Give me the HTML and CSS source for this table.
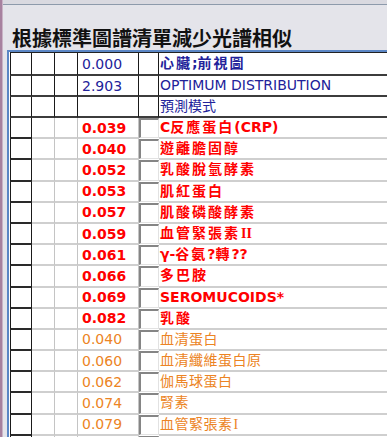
FILE: index.html
```html
<!DOCTYPE html>
<html>
<head>
<meta charset="utf-8">
<link rel="stylesheet" href="styles.css">
</head>
<body>
<div class="wrap">
  <div class="side"></div>
  <div class="main">
    <div class="topbar"></div>
    <h1 class="title">根據標準圖譜清單減少光譜相似</h1>
    <div class="frame">
      <div class="grid">
        <div class="row head first">
          <div class="c c1"></div><div class="c"></div><div class="c"></div>
          <div class="c num navy">0.000</div><div class="c"></div>
          <div class="c txt navy bold"><span class="cj">心臟</span>;<span class="cj">前視圖</span></div>
        </div>
        <div class="row head">
          <div class="c c1"></div><div class="c"></div><div class="c"></div>
          <div class="c num navy">2.903</div><div class="c"></div>
          <div class="c txt navy">OPTIMUM DISTRIBUTION</div>
        </div>
        <div class="row head">
          <div class="c c1"></div><div class="c"></div><div class="c"></div>
          <div class="c num navy"></div><div class="c"></div>
          <div class="c txt navy">預測模式</div>
        </div>

        <div class="row body red">
          <div class="c c1"></div><div class="c"></div><div class="c"></div>
          <div class="c num">0.039</div><div class="c chk"><span class="box"></span></div>
          <div class="c txt">C<span class="cj">反應蛋白</span>(CRP)</div>
        </div>
        <div class="row body red">
          <div class="c c1"></div><div class="c"></div><div class="c"></div>
          <div class="c num">0.040</div><div class="c chk"><span class="box"></span></div>
          <div class="c txt"><span class="cj">遊離膽固醇</span></div>
        </div>
        <div class="row body red">
          <div class="c c1"></div><div class="c"></div><div class="c"></div>
          <div class="c num">0.052</div><div class="c chk"><span class="box"></span></div>
          <div class="c txt"><span class="cj">乳酸脫氫酵素</span></div>
        </div>
        <div class="row body red">
          <div class="c c1"></div><div class="c"></div><div class="c"></div>
          <div class="c num">0.053</div><div class="c chk"><span class="box"></span></div>
          <div class="c txt"><span class="cj">肌紅蛋白</span></div>
        </div>
        <div class="row body red">
          <div class="c c1"></div><div class="c"></div><div class="c"></div>
          <div class="c num">0.057</div><div class="c chk"><span class="box"></span></div>
          <div class="c txt"><span class="cj">肌酸磷酸酵素</span></div>
        </div>
        <div class="row body red">
          <div class="c c1"></div><div class="c"></div><div class="c"></div>
          <div class="c num">0.059</div><div class="c chk"><span class="box"></span></div>
          <div class="c txt"><span class="cj">血管緊張素</span><span class="serif">II</span></div>
        </div>
        <div class="row body red">
          <div class="c c1"></div><div class="c"></div><div class="c"></div>
          <div class="c num">0.061</div><div class="c chk"><span class="box"></span></div>
          <div class="c txt">γ-<span class="cj">谷氨</span>?<span class="cj">轉</span>??</div>
        </div>
        <div class="row body red">
          <div class="c c1"></div><div class="c"></div><div class="c"></div>
          <div class="c num">0.066</div><div class="c chk"><span class="box"></span></div>
          <div class="c txt"><span class="cj">多巴胺</span></div>
        </div>
        <div class="row body red">
          <div class="c c1"></div><div class="c"></div><div class="c"></div>
          <div class="c num">0.069</div><div class="c chk"><span class="box"></span></div>
          <div class="c txt">SEROMUCOIDS*</div>
        </div>
        <div class="row body red">
          <div class="c c1"></div><div class="c"></div><div class="c"></div>
          <div class="c num">0.082</div><div class="c chk"><span class="box"></span></div>
          <div class="c txt"><span class="cj">乳酸</span></div>
        </div>

        <div class="row body orange">
          <div class="c c1"></div><div class="c"></div><div class="c"></div>
          <div class="c num">0.040</div><div class="c chk"><span class="box"></span></div>
          <div class="c txt">血清蛋白</div>
        </div>
        <div class="row body orange">
          <div class="c c1"></div><div class="c"></div><div class="c"></div>
          <div class="c num">0.060</div><div class="c chk"><span class="box"></span></div>
          <div class="c txt">血清纖維蛋白原</div>
        </div>
        <div class="row body orange">
          <div class="c c1"></div><div class="c"></div><div class="c"></div>
          <div class="c num">0.062</div><div class="c chk"><span class="box"></span></div>
          <div class="c txt">伽馬球蛋白</div>
        </div>
        <div class="row body orange">
          <div class="c c1"></div><div class="c"></div><div class="c"></div>
          <div class="c num">0.074</div><div class="c chk"><span class="box"></span></div>
          <div class="c txt">腎素</div>
        </div>
        <div class="row body orange">
          <div class="c c1"></div><div class="c"></div><div class="c"></div>
          <div class="c num">0.079</div><div class="c chk"><span class="box"></span></div>
          <div class="c txt">血管緊張素<span class="serif">I</span></div>
        </div>
        <div class="row body orange">
          <div class="c c1"></div><div class="c"></div><div class="c"></div>
          <div class="c num"></div><div class="c chk"><span class="box"></span></div>
          <div class="c txt"></div>
        </div>
      </div>
    </div>
  </div>
</div>
</body>
</html>
```

FILE: styles.css
```css
html, body {
  margin: 0;
  padding: 0;
  height: 100%;
  overflow: hidden;
}
body {
  background: #e4e4ea;
  font-family: "DejaVu Sans", "Noto Sans CJK TC", sans-serif;
  font-size: 14px;
}
.wrap {
  display: flex;
  height: 437px;
}
.side {
  width: 2px;
  flex: none;
  background: #a7819f;
  border-right: 1px solid #c9b3c6;
}
.main {
  flex: 1;
  min-width: 0;
  display: flex;
  flex-direction: column;
}
.topbar {
  height: 4px;
  background: #d9d9e0;
  border-bottom: 1px solid #8d9aab;
  flex: none;
}
.title {
  margin: 21px 0 0 0;
  padding-left: 9px;
  height: 24px;
  line-height: 24px;
  font-family: "Noto Sans CJK TC", sans-serif;
  font-size: 20px;
  font-weight: bold;
  color: #111;
  white-space: nowrap;
  flex: none;
}
.frame {
  margin-left: 4px;
  flex: 1;
  background: #fff;
  border-left: 2px solid #5b86c5;
  border-top: 2px solid #5b86c5;
  padding-left: 1px;
  overflow: hidden;
}
.grid {
  border-top: 1px solid #222;
  width: 600px;
}
.row {
  display: grid;
  grid-template-columns: 22px 23px 23px 61px 20px 1fr;
  box-sizing: border-box;
}
.c {
  box-sizing: border-box;
  border-right: 1px solid #c4c4c4;
  border-bottom: 2px solid #cfcfcf;
  display: flex;
  align-items: center;
  white-space: nowrap;
  overflow: hidden;
}
.c1 {
  border-left: 1px solid #1a1a1a;
  border-right: 1px solid #1a1a1a;
  border-bottom: 2px solid #2a2a2a;
}
.head {
  height: 21px;
}
.head.first {
  height: 23px;
}
.head .c {
  border-right: 1px solid #1a1a1a;
  border-bottom: 2px solid #3c3c3c;
}
.head .c1 {
  border-left: 1px solid #1a1a1a;
}
.body {
  height: 21.2px;
}
.num {
  padding-left: 4px;
}
.c.txt {
  display: block;
  line-height: 19px;
  padding-left: 1px;
  border-right: none;
}
.head.first .c.txt {
  line-height: 21px;
}
.txt .cj {
  letter-spacing: 0.5px;
}
.red .txt .cj,
.bold .cj {
  letter-spacing: 2px;
}
.serif {
  font-family: "Liberation Serif", serif;
  padding-left: 1px;
}
.chk {
  border-right: none;
  border-bottom: none;
  padding: 0 0 1px 0;
  align-items: stretch;
}
.box {
  flex: 1;
  box-sizing: border-box;
  background: #fff;
  border-top: 2px solid #858585;
  border-left: 2px solid #858585;
  border-right: 1px solid #e2e2e2;
  border-bottom: 1px solid #e2e2e2;
}
.navy {
  color: #22229a;
}
.bold {
  font-weight: bold;
}
.red .num,
.red .txt {
  color: #ff0000;
  font-weight: bold;
}
.orange .num,
.orange .txt {
  color: #ec8424;
}
.orange .txt {
  letter-spacing: 0.5px;
}
```
